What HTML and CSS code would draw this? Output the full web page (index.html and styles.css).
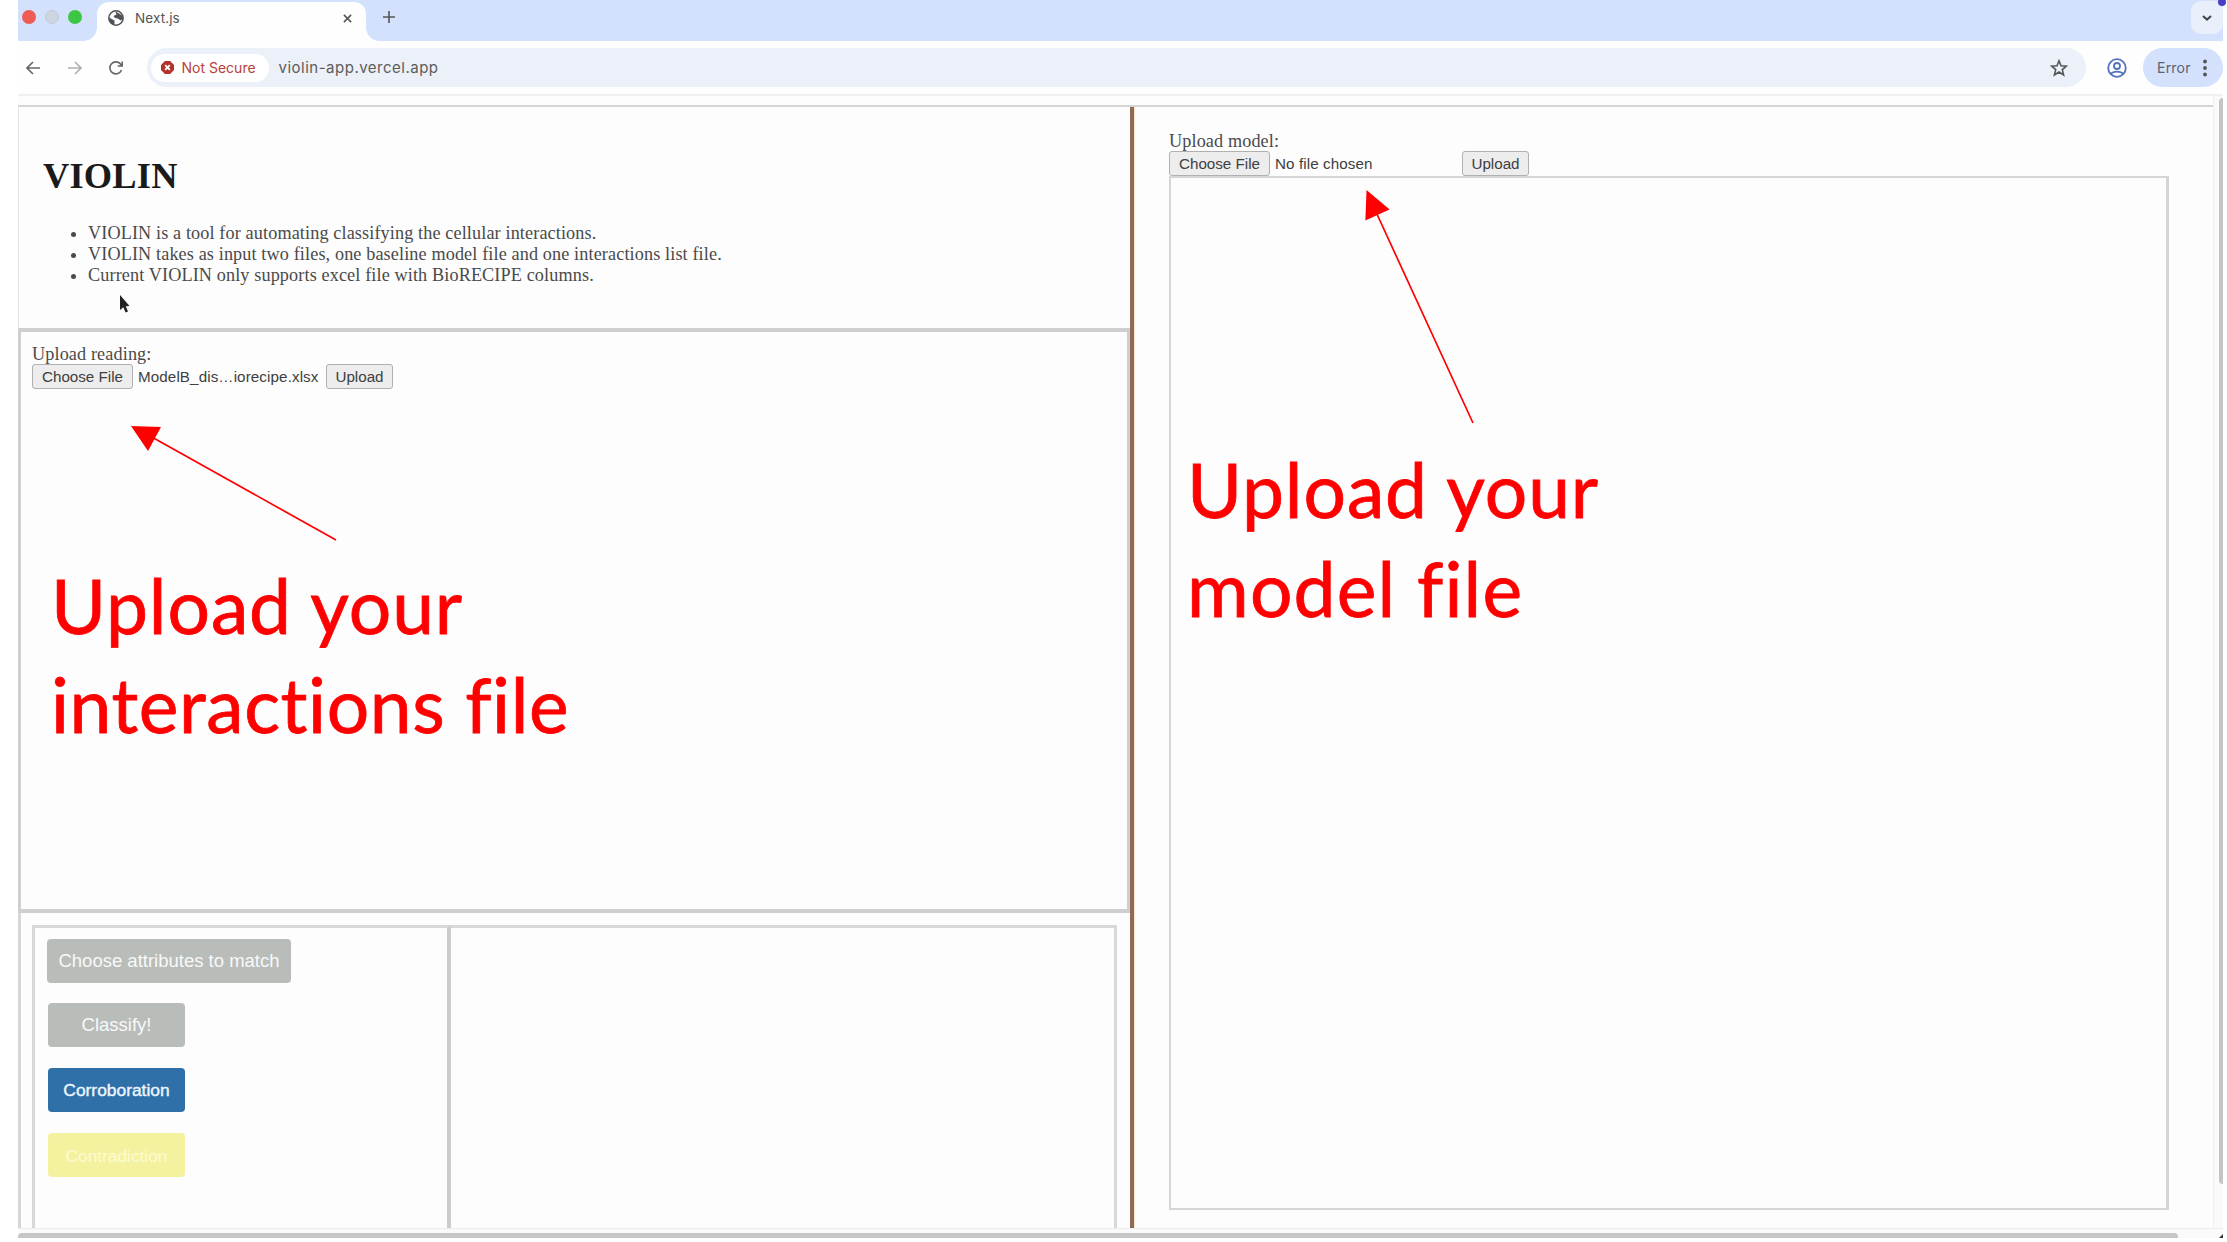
FILE: index.html
```
<!DOCTYPE html>
<html lang="en">

<head>
    <meta charset="UTF-8">
    <title>Next.js</title>
    <link rel="stylesheet" href="styles.css">
</head>

<body>

    <div class="window">
        <div class="tabstrip">
            <div class="lights">
                <span class="light red"></span>
                <span class="light gray"></span>
                <span class="light green"></span>
            </div>
            <div class="tab">
                <svg class="globe" viewBox="0 0 16 16">
                    <circle cx="8" cy="8" r="7.2" fill="#fff" stroke="#505356" stroke-width="1.5"/>
                    <path d="M1 7.500L4.500 9.500L6.500 10.500V14.800C3 14 1 11.500 1 7.500Z" fill="#505356"/>
                    <path d="M7 1L15 6V9L12.500 10.500L10 8.500L7 8L5.500 6L8.500 4.500Z" fill="#505356"/>
                </svg>
                <span class="tab-title">Next.js</span>
                <svg class="tab-close" viewBox="0 0 10 10"><path d="M1 1L9 9M9 1L1 9"/></svg>
            </div>
            <svg class="tab-new" viewBox="0 0 12 12"><path d="M6 0V12M0 6H12"/></svg>
            <div class="tab-search">
                <svg viewBox="0 0 10 6"><path d="M1 1L5 4.600L9 1"/></svg>
            </div>
        </div>

        <div class="toolbar">
            <svg class="nav" viewBox="0 0 14 14"><path d="M14 7H1M7 1L1 7L7 13"/></svg>
            <svg class="nav off" viewBox="0 0 14 14"><path d="M0 7H13M7 1L13 7L7 13"/></svg>
            <svg class="nav" viewBox="0 0 14 14"><path d="M12.500 9A6 6 0 1 1 11.500 3L13 5M13.200 0.500V5H8.700"/></svg>
            <div class="omnibox">
                <div class="not-secure">
                    <svg viewBox="0 0 14 14">
                        <path d="M4.200 0H9.800L14 4.200V9.800L9.800 14H4.200L0 9.800V4.200Z" fill="#b3322b"/>
                        <path d="M4.500 4.500L9.500 9.500M9.500 4.500L4.500 9.500" stroke="#fff" stroke-width="2"/>
                    </svg>
                    <span>Not Secure</span>
                </div>
                <span class="url">violin-app.vercel.app</span>
                <svg class="star" viewBox="0 0 18 18"><path d="M9 1.800L11 6.700L16.400 7.100L12.300 10.600L13.600 15.900L9 13L4.400 15.900L5.700 10.600L1.600 7.100L7 6.700Z"/></svg>
            </div>
            <svg class="profile" viewBox="0 0 20 20">
                <circle cx="10" cy="10" r="8.800"/>
                <circle cx="10" cy="8" r="3"/>
                <path d="M4 16C6 12.800 14 12.800 16 16"/>
            </svg>
            <div class="error">
                <span>Error</span>
                <svg viewBox="0 0 4 18"><circle cx="2" cy="2.500" r="1.900"/><circle cx="2" cy="9" r="1.900"/><circle cx="2" cy="15.500" r="1.900"/></svg>
            </div>
        </div>

        <div class="viewport">
            <div class="page">
                <div class="left">
                    <div class="intro">
                        <h1>VIOLIN</h1>
                        <ul>
                            <li>VIOLIN is a tool for automating classifying the cellular interactions.</li>
                            <li>VIOLIN takes as input two files, one baseline model file and one interactions list file.</li>
                            <li>Current VIOLIN only supports excel file with BioRECIPE columns.</li>
                        </ul>
                    </div>
                    <div class="reading">
                        <div class="label">Upload reading:</div>
                        <div class="file-row">
                            <button class="choose">Choose File</button>
                            <span class="file-name">ModelB_dis…iorecipe.xlsx</span>
                            <button class="upload">Upload</button>
                        </div>
                    </div>
                    <div class="results">
                        <div class="actions">
                            <button class="btn wide">Choose attributes to match</button>
                            <button class="btn">Classify!</button>
                            <button class="btn blue">Corroboration</button>
                            <button class="btn yellow">Contradiction</button>
                        </div>
                        <div class="output"></div>
                    </div>
                </div>
                <div class="right">
                    <div class="label">Upload model:</div>
                    <div class="file-row">
                        <button class="choose">Choose File</button>
                        <span class="file-name">No file chosen</span>
                        <button class="upload">Upload</button>
                    </div>
                    <div class="model"></div>
                </div>
            </div>
            <div class="scroll-y"><div class="thumb-y"></div></div>
        </div>
        <div class="scroll-x"><div class="thumb-x"></div></div>
    </div>

    <!-- notes drawn over the page -->
    <svg class="arrows" viewBox="0 0 2227 1242">
        <path class="line" d="M336 540L150 436M1473 423L1376 212"/>
        <path class="head" d="M131 426L161 427L148 451ZM1366.500 190L1389.600 209.500L1365.400 220.500Z"/>
        <path class="cursor" d="M120 295V310L123.300 307.200L125.600 312.500L128 311.500L125.800 306.300L129.500 306Z"/>
        <circle class="dot" cx="2222" cy="2" r="4"/>
        <path class="corner" d="M2219 1238L2223 1234V1238Z"/>
    </svg>
    <div class="note note-left">Upload your<br><span class="line-2">interactions file</span></div>
    <div class="note note-right">Upload your<br><span class="line-2">model file</span></div>

</body>

</html>
```

FILE: styles.css
```
*{
    box-sizing: border-box;
}

body{
    margin: 0;
    background-color: #fff;
    overflow: hidden;
}

svg{
    display: block;
    fill: none;
}

button{
    cursor: pointer;
    font-family: "Liberation Sans", Arial, sans-serif;
}

.window{
    width: 2205px;
    height: 1238px;
    margin-left: 18px;
    display: flex;
    flex-direction: column;
    overflow: hidden;
    font-family: Inter, Roboto, sans-serif;
}

/* Tab strip */
.tabstrip{
    height: 41px;
    flex: none;
    display: flex;
    background-color: #d3e1fd;
}

.lights{
    width: 79px;
    display: flex;
    gap: 9px;
    padding: 10px 0 0 4px;
}

.light{
    width: 14px;
    height: 14px;
    border-radius: 50%;
}

.red{
    background-color: #ee5c54;
}

.gray{
    background-color: #cdd5e1;
    border: 1px solid #c2cad8;
}

.green{
    background-color: #3dc644;
}

.tab{
    position: relative;
    width: 269px;
    height: 39px;
    margin-top: 2px;
    padding: 0 14px 7px 11px;
    display: flex;
    align-items: center;
    background-color: #fefefe;
    border-radius: 12px 12px 0 0;
}

.tab::before,
.tab::after{
    content: "";
    position: absolute;
    bottom: 0;
    width: 13px;
    height: 13px;
}

.tab::before{
    left: -13px;
    background: radial-gradient(circle at 0 0, transparent 12.5px, #fefefe 13px);
}

.tab::after{
    right: -13px;
    background: radial-gradient(circle at 100% 0, transparent 12.5px, #fefefe 13px);
}

.globe{
    width: 16px;
    height: 16px;
}

.tab-title{
    margin-left: 11px;
    font-size: 13.500px;
    letter-spacing: 0.100px;
    color: #555;
}

.tab-close{
    width: 9px;
    height: 9px;
    margin-left: auto;
    stroke: #555;
    stroke-width: 1.700;
}

.tab-new{
    width: 12px;
    height: 12px;
    margin: 11px 0 0 17px;
    stroke: #555;
    stroke-width: 1.600;
}

.tab-search{
    width: 32px;
    height: 33px;
    margin: 1px 0 0 auto;
    display: flex;
    align-items: center;
    justify-content: center;
    background-color: #eaf0fb;
    border-radius: 10px;
}

.tab-search svg{
    width: 10px;
    height: 6px;
    stroke: #444;
    stroke-width: 2;
}

/* Toolbar */
.toolbar{
    height: 55px;
    flex: none;
    display: flex;
    align-items: center;
    padding-left: 8px;
    background-color: #fefefe;
    border-bottom: 2px solid #f0f0f0;
}

.nav{
    width: 14px;
    height: 14px;
    margin-right: 27.500px;
    stroke: #666;
    stroke-width: 1.600;
}

.off{
    stroke: #b0b0b0;
}

.omnibox{
    width: 1940px;
    height: 39px;
    margin-left: -4px;
    display: flex;
    align-items: center;
    padding: 0 18px 0 4px;
    border-radius: 20px;
    background-color: #ebf0f9;
}

.not-secure{
    width: 118px;
    height: 28px;
    display: flex;
    align-items: center;
    padding-left: 10px;
    gap: 8px;
    border-radius: 14px;
    background-color: #fff;
    font-size: 14px;
    color: #b8413a;
    white-space: nowrap;
}

.not-secure svg{
    width: 13px;
    height: 13px;
}

.url{
    margin-left: 10px;
    font-size: 15px;
    letter-spacing: 0.500px;
    color: #5c5c5c;
}

.star{
    width: 18px;
    height: 18px;
    margin-left: auto;
    stroke: #555;
    stroke-width: 1.600;
}

.profile{
    width: 20px;
    height: 20px;
    margin-left: 21px;
    stroke: #5571bd;
    stroke-width: 1.800;
}

.error{
    width: 80px;
    height: 39px;
    margin-left: 16px;
    padding: 0 16px 0 14px;
    display: flex;
    align-items: center;
    justify-content: space-between;
    border-radius: 20px;
    background-color: #d3e1fd;
    font-size: 14px;
    letter-spacing: 0.200px;
    color: #5b6270;
}

.error svg{
    width: 4px;
    height: 18px;
    fill: #555;
}

/* Page */
.viewport{
    height: 1132px;
    flex: none;
    display: flex;
    background-color: #fdfdfd;
}

.page{
    width: 2195px;
    margin-top: 9px;
    display: flex;
    border-top: 2px solid #d5d5d5;
    font-family: "Liberation Serif", "Times New Roman", serif;
    font-size: 18.200px;
    line-height: 21px;
    letter-spacing: 0.120px;
    color: #4a4a4a;
}

.left{
    width: 1112px;
    display: flex;
    flex-direction: column;
}

.intro{
    height: 221px;
    padding: 48px 0 0 24px;
    border-left: 1px solid #e4e4e4;
}

h1{
    margin: 0 0 26px;
    font-size: 36.400px;
    line-height: 42px;
    letter-spacing: 0.200px;
    color: #1a1a1a;
}

ul{
    margin: 0;
    padding-left: 45px;
}

li{
    white-space: nowrap;
}

.reading{
    height: 585px;
    padding: 13px 11px;
    border: solid #cfcfcf;
    border-width: 4px 3px 4px 3px;
}

.label{
    height: 19px;
    line-height: 19px;
    white-space: nowrap;
}

.file-row{
    height: 25px;
    display: flex;
    align-items: center;
    font-family: "Liberation Sans", Arial, sans-serif;
    font-size: 15.200px;
    color: #404040;
}

.choose,
.upload{
    height: 25px;
    padding: 0;
    font-size: 15.200px;
    color: #404040;
    background-color: #ededed;
    border: 1.500px solid #b0b0b0;
    border-radius: 3px;
    white-space: nowrap;
}

.choose{
    width: 101px;
}

.upload{
    width: 67px;
}

.file-name{
    margin-left: 5px;
    letter-spacing: 0.100px;
    white-space: nowrap;
}

.reading .file-name{
    width: 188px;
}

.results{
    flex: 1;
    display: flex;
    padding: 12px 13px 0 11px;
    border-left: 3px solid #d6d6d6;
}

.actions{
    width: 419px;
    display: flex;
    flex-direction: column;
    align-items: flex-start;
    gap: 21px;
    padding: 11px 0 0 13px;
    border: solid #d8d8d8;
    border-width: 3px 4px 0 3px;
    border-right-color: #cccccc;
}

.output{
    flex: 1;
    border-top: 3px solid #d8d8d8;
    border-right: 3px solid #d8d8d8;
}

.btn{
    width: 137px;
    height: 44px;
    padding: 0;
    border: none;
    border-radius: 4px;
    background-color: #b9bdb9;
    color: #f8f8f8;
    font-size: 18.500px;
    white-space: nowrap;
}

.wide{
    width: 244px;
    margin-left: -1px;
    margin-bottom: -1px;
}

.blue{
    background-color: #2f70a8;
    color: #eef6ff;
    font-size: 17.400px;
    -webkit-text-stroke: 0.400px #eef6ff;
}

.yellow{
    padding-top: 2px;
    background-color: #f4f29f;
    color: #fcfbd2;
    font-size: 17.300px;
}

.right{
    flex: 1;
    padding: 25px 44px 0 35px;
    border-left: 4px solid #8e6a57;
    box-shadow: inset 1px 0 0 #f6e3d0;
}

.right .file-name{
    width: 187px;
}

.model{
    height: 1034px;
    border: 2px solid #d6d6d6;
    border-right-width: 3px;
}

/* Scrollbars */
.scroll-y{
    width: 10px;
    padding: 2px 0 0 5px;
    border-left: 1px solid #f0f0f0;
    background-color: #fafafa;
}

.thumb-y{
    width: 8px;
    height: 1086px;
    border-radius: 4px;
    background-color: #c4c4c4;
}

.scroll-x{
    height: 10px;
    flex: none;
    padding-top: 4px;
    border-top: 1px solid #ececec;
    background-color: #fafafa;
}

.thumb-x{
    width: 2160px;
    height: 8px;
    border-radius: 4px;
    background-color: #c6c6c6;
}

/* Notes */
.arrows{
    position: absolute;
    top: 0;
    left: 0;
    width: 2227px;
    height: 1242px;
}

.line{
    stroke: #f00;
    stroke-width: 1.700;
}

.head{
    fill: #f00;
}

.cursor{
    fill: #222;
}

.dot{
    fill: #4a3fc4;
}

.corner{
    fill: #333;
}

.note{
    position: absolute;
    font-family: Lato, sans-serif;
    font-size: 75px;
    line-height: 99px;
    letter-spacing: 0.900px;
    color: #f00;
    -webkit-text-stroke: 0.800px #f00;
    white-space: nowrap;
    font-variant-ligatures: none;
}

.note-left{
    top: 556px;
    left: 51px;
}

.note-left .line-2{
    letter-spacing: 0.600px;
}

.note-right{
    top: 440px;
    left: 1187px;
}

.note-right .line-2{
    letter-spacing: 1.200px;
}
```
